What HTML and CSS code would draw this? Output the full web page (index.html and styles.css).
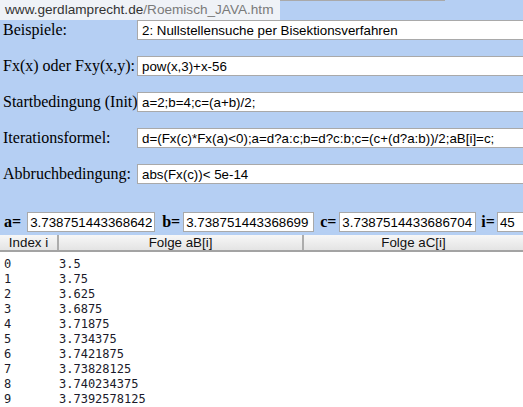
FILE: index.html
```html
<!DOCTYPE html>
<html>
<head>
<meta charset="utf-8">
<link rel="stylesheet" href="styles.css">
</head>
<body>
<div class="page">
  <div class="prev"></div>
  <div class="rows">
    <div class="row"><span class="lbl">Beispiele:</span><input class="field" value="2: Nullstellensuche per Bisektionsverfahren"></div>
    <div class="row"><span class="lbl">Fx(x) oder Fxy(x,y):</span><input class="field" value="pow(x,3)+x-56"></div>
    <div class="row"><span class="lbl">Startbedingung (Init)</span><input class="field" value="a=2;b=4;c=(a+b)/2;"></div>
    <div class="row"><span class="lbl">Iterationsformel:</span><input class="field" value="d=(Fx(c)*Fx(a)&lt;0);a=d?a:c;b=d?c:b;c=(c+(d?a:b))/2;aB[i]=c;"></div>
    <div class="row"><span class="lbl">Abbruchbedingung:</span><input class="field" value="abs(Fx(c))&lt; 5e-14"></div>
  </div>
  <div class="vars">
    <b class="var var-a">a=</b><input class="num num-a" value="3.738751443368642">
    <b class="var var-b">b=</b><input class="num num-b" value="3.738751443368699">
    <b class="var var-c">c=</b><input class="num num-c" value="3.7387514433686704">
    <b class="var var-i">i=</b><input class="num num-i" value="45">
  </div>
  <div class="head">
    <div class="hcell h-idx">Index i</div>
    <div class="hcell h-ab">Folge aB[i]</div>
    <div class="hcell h-ac">Folge aC[i]</div>
  </div>
  <div class="data">
    <div class="drow"><span class="di">0</span><span>3.5</span></div>
    <div class="drow"><span class="di">1</span><span>3.75</span></div>
    <div class="drow"><span class="di">2</span><span>3.625</span></div>
    <div class="drow"><span class="di">3</span><span>3.6875</span></div>
    <div class="drow"><span class="di">4</span><span>3.71875</span></div>
    <div class="drow"><span class="di">5</span><span>3.734375</span></div>
    <div class="drow"><span class="di">6</span><span>3.7421875</span></div>
    <div class="drow"><span class="di">7</span><span>3.73828125</span></div>
    <div class="drow"><span class="di">8</span><span>3.740234375</span></div>
    <div class="drow"><span class="di">9</span><span>3.7392578125</span></div>
  </div>
</div>
<div class="status">www.gerdlamprecht.de<span class="path">/Roemisch_JAVA.htm</span></div>
</body>
</html>
```
FILE: styles.css
```css
html, body {
  margin: 0;
  padding: 0;
  width: 523px;
  height: 407px;
  overflow: hidden;
  background: #b5cff3;
}
body {
  position: relative;
  font-family: "Liberation Serif", "Times New Roman", serif;
  font-size: 16px;
  color: #000;
}
.page {
  display: flex;
  flex-direction: column;
  height: 407px;
}
.prev {
  margin-left: 137px;
  width: 308px;
  height: 3px;
  box-sizing: border-box;
  background: #fff;
  border: 1px solid #a9a9a9;
  border-top: none;
}
.rows {
  display: flex;
  flex-direction: column;
  gap: 16px;
  margin-top: 19px;
}
.row {
  display: flex;
  align-items: center;
  height: 20px;
}
.lbl {
  width: 134px;
  padding-left: 3px;
  flex-shrink: 0;
  white-space: nowrap;
  line-height: 20px;
}
input {
  font-family: "Liberation Sans", Arial, sans-serif;
  font-size: 13.33px;
  color: #000;
  background: #fff;
  box-sizing: border-box;
  height: 20px;
  border: 1px solid #a9a9a9;
  outline: none;
  margin: 0;
  min-width: 0;
}
.field {
  flex: 1;
  border-right: none;
  padding: 0 4px;
}
.vars {
  display: flex;
  align-items: center;
  height: 20px;
  margin-top: 28px;
}
.var {
  font-weight: bold;
  white-space: nowrap;
  flex-shrink: 0;
}
.var-a { margin-left: 4px; margin-right: 6px; }
.var-b { margin-left: 7px; margin-right: 3px; }
.var-c { margin-left: 6px; margin-right: 3px; }
.var-i { margin-left: 5px; margin-right: 2px; }
.num {
  padding: 0 2px;
  flex-shrink: 0;
}
.num-a { width: 128px; }
.num-b { width: 131px; }
.num-c { width: 137px; }
.num-i { flex: 1; flex-shrink: 1; border-right: none; }
.head {
  display: flex;
  margin-top: 3px;
  height: 21px;
  box-sizing: border-box;
  background: linear-gradient(#f7f7f7, #e4e4e4);
  border-bottom: 2px solid #a3a3a3;
  font-family: "Liberation Sans", Arial, sans-serif;
  font-size: 13.33px;
  color: #111;
}
.hcell {
  display: flex;
  align-items: center;
  justify-content: center;
  box-sizing: border-box;
  border-right: 2px solid #acacac;
}
.h-idx { width: 59px; }
.h-ab { width: 245px; }
.h-ac { flex: 1; border-right: none; }
.data {
  flex: 1;
  background: #fff;
  padding-top: 5px;
  font-family: "DejaVu Sans Mono", "Liberation Mono", monospace;
  font-size: 12px;
  line-height: 15px;
  color: #1a1a2a;
}
.drow {
  display: flex;
  white-space: pre;
}
.di {
  width: 59px;
  padding-left: 4px;
  box-sizing: border-box;
}
.status {
  position: absolute;
  top: 0;
  left: 0;
  width: 280px;
  height: 20px;
  box-sizing: border-box;
  padding-left: 5px;
  background: #eff2f7;
  font-family: "Liberation Sans", Arial, sans-serif;
  font-size: 13.6px;
  line-height: 20px;
  color: #333;
  white-space: nowrap;
}
.path { color: #7a7a7a; }
```
